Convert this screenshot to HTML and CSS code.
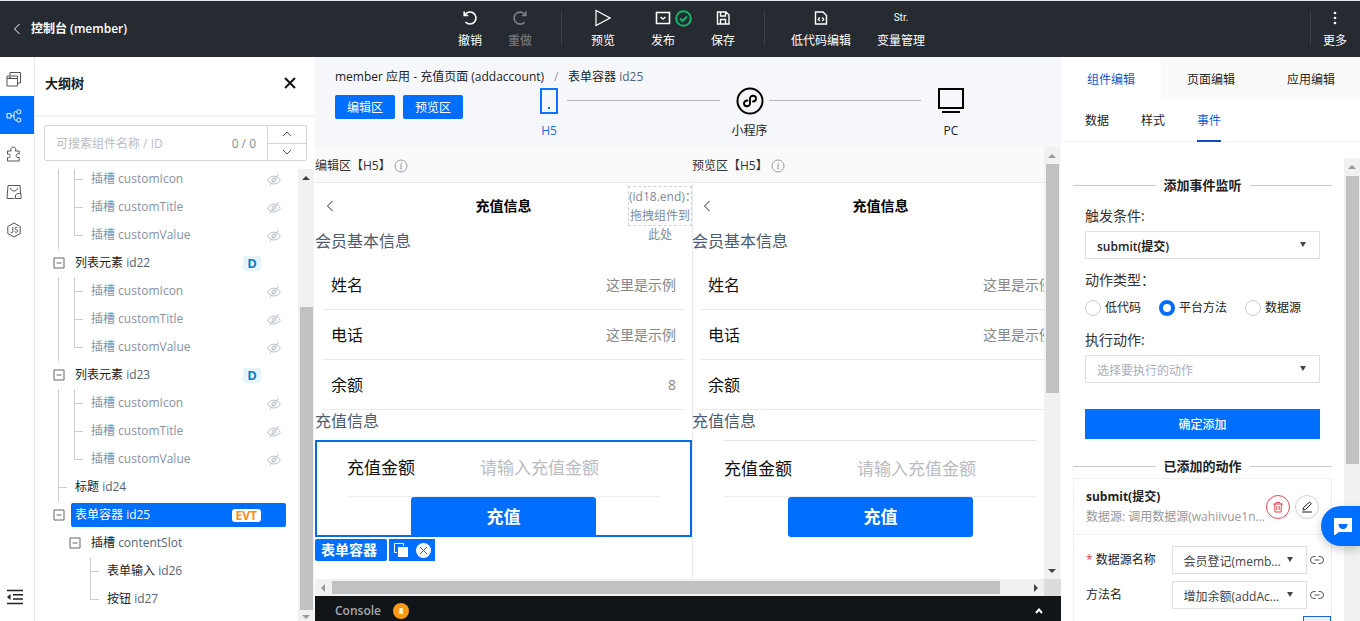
FILE: index.html
```html
<!DOCTYPE html>
<html lang="zh-CN">
<head>
<meta charset="utf-8">
<title>控制台 (member)</title>
<link rel="stylesheet" href="styles.css">
</head>
<body>
<svg class="defs" aria-hidden="true">
  <symbol id="eye" viewBox="0 0 14 14"><path d="M.7 7.2C2.2 4.6 4.4 3.2 7 3.2s4.800 1.400 6.300 4C11.800 9.800 9.600 11 7 11S2.200 9.800.7 7.200Z"/><circle cx="7" cy="7.100" r="2.100"/><path d="M11.300 1.500 2.700 12.500"/></symbol>
  <symbol id="minus" viewBox="0 0 12 12"><path d="M1 1h10v10H1ZM3.500 6h5"/></symbol>
  <symbol id="info" viewBox="0 0 14 14"><circle cx="7" cy="7" r="6"/><path d="M6 5.800h1.400L6.600 10h1.200M7.500 3.500v1"/></symbol>
  <symbol id="back" viewBox="0 0 8 12"><path d="M6.500 1 1.500 6l5 5"/></symbol>
  <symbol id="link" viewBox="0 0 14 10"><path d="M5.500 1.500H4a3.500 3.500 0 0 0 0 7h1.500M8.500 1.500H10a3.500 3.500 0 0 1 0 7H8.500M4.500 5h5"/></symbol>
</svg>

<header class="topbar">
  <a class="home" href="#"><svg width="8" height="12"><use href="#back"/></svg>控制台 (member)</a>
  <nav class="tools">
    <button class="tool w50"><span class="ticon"><svg width="16" height="16" viewBox="0 0 16 16"><path d="M2.200 1.500v4h4M2.600 5.300A6 6 0 1 1 3.500 12" stroke-width="1.600"/></svg></span>撤销</button>
    <button class="tool w50 off"><span class="ticon"><svg width="16" height="16" viewBox="0 0 16 16"><path d="M13.800 1.500v4h-4M13.400 5.300A6 6 0 1 0 12.500 12.200" stroke-width="1.600"/></svg></span>重做</button>
    <i class="vline first"></i>
    <button class="tool w60"><span class="ticon"><svg width="16" height="18" viewBox="0 0 16 18"><path d="M1 1.500v15L15 9Z" stroke-width="1.200"/></svg></span>预览</button>
    <button class="tool w60"><span class="ticon publish"><svg width="16" height="14" viewBox="0 0 16 14"><path d="M1.500 1.500h13v11h-13ZM5.500 6l2.500 2 2.500-2" stroke-width="1.600"/></svg><svg class="ok" width="17" height="17" viewBox="0 0 17 17"><circle cx="8.500" cy="8.500" r="7.300"/><path d="m5 8.500 2.500 2.500L12 6.500"/></svg></span>发布</button>
    <button class="tool w60"><span class="ticon"><svg width="14" height="14" viewBox="0 0 14 14"><path d="M1.500 1h8.500l3 3v9H1.500ZM4.500 1v4h5V1M4.500 13V8.500h5V13" stroke-width="1.400"/></svg></span>保存</button>
    <i class="vline second"></i>
    <button class="tool w80"><span class="ticon"><svg width="14" height="14" viewBox="0 0 14 14"><path d="M1.500 1H9l3.500 3.500V13h-11ZM5.800 6.500 4.300 8.300l1.500 1.800M8.200 6.500l1.500 1.800-1.500 1.800" stroke-width="1.400"/></svg></span>低代码编辑</button>
    <button class="tool w80"><span class="ticon str">Str.</span>变量管理</button>
  </nav>
  <button class="tool more"><span class="ticon"><svg width="4" height="14" viewBox="0 0 4 14"><g fill="#fff" stroke="none"><circle cx="2" cy="2" r="1.300"/><circle cx="2" cy="7" r="1.300"/><circle cx="2" cy="12" r="1.300"/></g></svg></span>更多</button>
</header>

<main class="work">
  <nav class="rail">
    <button aria-label="页面"><svg width="16" height="16" viewBox="0 0 16 16"><path d="M1 5h10.500v10H1ZM1 7.500h10.500M4 4.500V1.500h10.500V12H12M3 6.300h2"/></svg></button>
    <button class="on" aria-label="大纲树"><svg width="16" height="14" viewBox="0 0 16 14"><path d="M1 4.500h4v4.500H1ZM5 6.800h3M10.500 2.500H9.800C8.500 2.500 8 3.200 8 4.200v5c0 1.200.5 2 1.800 2h.7"/><circle cx="12.800" cy="2.800" r="2.100"/><circle cx="12.800" cy="11" r="2.100"/></svg></button>
    <button aria-label="组件"><svg width="16" height="16" viewBox="0 0 16 16"><path d="M1.500 5h3.700C4.200 3 5.300 1 7.300 1s3.100 2 2.100 4h3.800v3c-2-.8-3 .3-3 1.700s1 2.500 3 1.700V15H1.500v-3.500c2 .8 2.600-.2 2.600-1.600S3.500 7.500 1.500 8.200Z"/></svg></button>
    <button aria-label="素材"><svg width="16" height="16" viewBox="0 0 16 16"><path d="M8.500 14.500H1L2 1.500h12l.6 8M4.500 4c.5 4 6.500 4 7 0M9.500 14.500V11l2-1.500h3.500v5Z"/></svg></button>
    <button aria-label="脚本"><svg width="16" height="16" viewBox="0 0 16 16"><path d="m8 1 6.200 3.500v7L8 15l-6.200-3.500v-7ZM6.800 5v4.500c0 1.500-2 1.500-2.300.4M11.500 6c-.8-1-2.900-.8-2.700.6.200 1.200 2.900.8 2.900 2.500 0 1.500-2.500 1.500-3.200.4"/></svg></button>
    <button class="fold" aria-label="收起"><svg width="18" height="16" viewBox="0 0 18 16"><path d="M1 1.500h16M7 5.800h10M7 10h10M1 14.500h16" stroke-width="1.600"/><path d="M4.500 5v6L1 8Z" fill="#222" stroke="none"/></svg></button>
  </nav>

  <aside class="outline">
    <div class="ohead"><h2>大纲树</h2><button aria-label="关闭"><svg width="12" height="12" viewBox="0 0 12 12"><path d="m1 1 10 10M11 1 1 11"/></svg></button></div>
    <div class="search">
      <input type="text" aria-label="搜索组件" placeholder="可搜索组件名称 / ID">
      <span class="count">0 / 0</span>
      <div class="steps-btn">
        <button aria-label="上一个"><svg width="10" height="6" viewBox="0 0 10 6"><path d="m1 5 4-4 4 4"/></svg></button>
        <button aria-label="下一个"><svg width="10" height="6" viewBox="0 0 10 6"><path d="m1 1 4 4 4-4"/></svg></button>
      </div>
    </div>
    <div class="treebox">
      <ul class="tree">
        <li class="dim"><i class="g v"></i><i class="g t"></i><span class="node">插槽 customIcon<svg class="eye"><use href="#eye"/></svg></span></li>
        <li class="dim"><i class="g v"></i><i class="g t"></i><span class="node">插槽 customTitle<svg class="eye"><use href="#eye"/></svg></span></li>
        <li class="dim"><i class="g v"></i><i class="g l"></i><span class="node">插槽 customValue<svg class="eye"><use href="#eye"/></svg></span></li>
        <li><button class="g" aria-label="折叠"><svg><use href="#minus"/></svg></button><span class="node">列表元素 <em>id22</em><b class="tagd">D</b></span></li>
        <li class="dim"><i class="g v"></i><i class="g t"></i><span class="node">插槽 customIcon<svg class="eye"><use href="#eye"/></svg></span></li>
        <li class="dim"><i class="g v"></i><i class="g t"></i><span class="node">插槽 customTitle<svg class="eye"><use href="#eye"/></svg></span></li>
        <li class="dim"><i class="g v"></i><i class="g l"></i><span class="node">插槽 customValue<svg class="eye"><use href="#eye"/></svg></span></li>
        <li><button class="g" aria-label="折叠"><svg><use href="#minus"/></svg></button><span class="node">列表元素 <em>id23</em><b class="tagd">D</b></span></li>
        <li class="dim"><i class="g v"></i><i class="g t"></i><span class="node">插槽 customIcon<svg class="eye"><use href="#eye"/></svg></span></li>
        <li class="dim"><i class="g v"></i><i class="g t"></i><span class="node">插槽 customTitle<svg class="eye"><use href="#eye"/></svg></span></li>
        <li class="dim"><i class="g v"></i><i class="g l"></i><span class="node">插槽 customValue<svg class="eye"><use href="#eye"/></svg></span></li>
        <li><i class="g t"></i><span class="node">标题 <em>id24</em></span></li>
        <li class="sel"><button class="g" aria-label="折叠"><svg><use href="#minus"/></svg></button><span class="node">表单容器 <em>id25</em><b class="evt">EVT</b></span></li>
        <li><i class="g"></i><button class="g" aria-label="折叠"><svg><use href="#minus"/></svg></button><span class="node">插槽 <em>contentSlot</em></span></li>
        <li><i class="g"></i><i class="g"></i><i class="g t"></i><span class="node">表单输入 <em>id26</em></span></li>
        <li><i class="g"></i><i class="g"></i><i class="g l"></i><span class="node">按钮 <em>id27</em></span></li>
      </ul>
      <div class="vbar tbar"><i class="up dark"></i><i class="thumb"></i><i class="down"></i></div>
    </div>
  </aside>

  <section class="center">
    <div class="chead">
      <div class="crumbs"><span>member 应用 - 充值页面 (addaccount)</span><i>/</i><span>表单容器 <em>id25</em></span></div>
      <div class="modes">
        <button class="pill">编辑区</button><button class="pill">预览区</button>
        <div class="platforms">
          <button class="pf on"><svg width="18" height="26" viewBox="0 0 18 26"><path d="M1 1h16v24H1Z" stroke-width="2"/><path d="M8 19h2v2H8Z" fill="#006eff" stroke="none"/></svg>H5</button>
          <i class="conn"></i>
          <button class="pf"><svg width="28" height="28" viewBox="0 0 28 28"><circle cx="14" cy="14" r="12.500" stroke-width="2"/><path d="M11.500 13.500C9 13.500 8 15 8 16.500c0 3.500 6 3.800 6 0v-5c0-3.800 6-3.500 6 0 0 1.700-1.200 3-3 3" stroke-width="1.900" stroke-linecap="round"/></svg>小程序</button>
          <i class="conn"></i>
          <button class="pf"><svg width="26" height="26" viewBox="0 0 26 26"><path d="M1 1h24v19H1ZM4 24h18" stroke-width="2"/></svg>PC</button>
        </div>
      </div>
    </div>

    <div class="stage">
      <div class="panes">
        <div class="pane">
          <div class="ptitle">编辑区【H5】<svg width="14" height="14"><use href="#info"/></svg></div>
          <div class="phone">
            <div class="pnav"><svg width="8" height="12"><use href="#back"/></svg><strong>充值信息</strong><div class="slot">(id18.end)：拖拽组件到此处</div></div>
            <h3>会员基本信息</h3>
            <dl class="cells">
              <div><dt>姓名</dt><dd>这里是示例</dd></div>
              <div><dt>电话</dt><dd>这里是示例</dd></div>
              <div><dt>余额</dt><dd>8</dd></div>
            </dl>
            <h3>充值信息</h3>
            <form class="pay picked">
              <div class="field"><label for="amt1">充值金额</label><input id="amt1" type="text" placeholder="请输入充值金额"></div>
              <button type="button">充值</button>
            </form>
            <div class="handle"><span>表单容器</span><div><svg width="14" height="14" viewBox="0 0 14 14"><path d="M3 9.500H.5V.5h9V3" stroke="#fff" fill="none"/><path d="M4 4h10v10H4Z" fill="#fff" stroke="none"/></svg><svg width="15" height="15" viewBox="0 0 15 15"><circle cx="7.500" cy="7.500" r="7.500" fill="#fff" stroke="none"/><path d="m4 4 7 7M11 4l-7 7" stroke="#006eff"/></svg></div></div>
          </div>
        </div>
        <div class="pane">
          <div class="ptitle">预览区【H5】<svg width="14" height="14"><use href="#info"/></svg></div>
          <div class="phone side">
            <div class="pnav"><svg width="8" height="12"><use href="#back"/></svg><strong>充值信息</strong></div>
            <h3>会员基本信息</h3>
            <dl class="cells">
              <div><dt>姓名</dt><dd>这里是示例</dd></div>
              <div><dt>电话</dt><dd>这里是示例</dd></div>
              <div><dt>余额</dt><dd></dd></div>
            </dl>
            <h3>充值信息</h3>
            <form class="pay">
              <div class="field lined"><label for="amt2">充值金额</label><input id="amt2" type="text" placeholder="请输入充值金额"></div>
              <button type="button">充值</button>
            </form>
          </div>
        </div>
      </div>
      <div class="vbar sbar"><i class="up"></i><i class="thumb"></i><i class="down dark"></i></div>
    </div>
    <div class="hbar"><i class="left"></i><div class="htrack"><i class="thumb"></i></div><i class="right"></i><i class="corner"></i></div>
    <footer class="console">Console<b>8</b><button aria-label="展开"><svg width="8" height="6" viewBox="0 0 8 6"><path d="m1 5 3-3.500L7 5"/></svg></button></footer>
  </section>

  <aside class="props">
    <div class="tabs"><button class="on">组件编辑</button><button>页面编辑</button><button>应用编辑</button></div>
    <div class="subtabs"><button>数据</button><button>样式</button><button class="on">事件</button></div>
    <div class="pbody">
      <div class="pcontent">
        <h4>添加事件监听</h4>
        <div class="block">
          <label class="lab" for="s1">触发条件:</label>
          <div class="pick"><select id="s1" class="strong"><option>submit(提交)</option></select></div>
          <p class="lab">动作类型：</p>
          <div class="radios">
            <label><input type="radio" name="k">低代码</label>
            <label><input type="radio" name="k" checked>平台方法</label>
            <label><input type="radio" name="k">数据源</label>
          </div>
          <label class="lab" for="s2">执行动作:</label>
          <div class="pick"><select id="s2" class="empty"><option>选择要执行的动作</option></select></div>
          <button class="submit">确定添加</button>
        </div>
        <h4>已添加的动作</h4>
        <div class="card">
          <div class="cardhead">
            <div class="what"><strong>submit(提交)</strong><span>数据源: 调用数据源(wahiivue1n...</span></div>
            <button class="round del" aria-label="删除"><svg width="12" height="12" viewBox="0 0 12 12"><path d="M1 3h10M4 3V1.500h4V3M2.500 3l.5 8h6l.5-8M4.800 5v4M7.200 5v4"/></svg></button>
            <button class="round" aria-label="编辑"><svg width="12" height="12" viewBox="0 0 12 12"><path d="M1 11h10M2 9l.6-2.600L8.500 1l1.800 1.800-5.800 5.700Z"/></svg></button>
          </div>
          <div class="param"><label for="s3"><i>*</i> 数据源名称</label><div class="pick small"><select id="s3"><option>会员登记(memb...</option></select></div><svg width="14" height="10"><use href="#link"/></svg></div>
          <div class="param"><label for="s4">方法名</label><div class="pick small"><select id="s4"><option>增加余额(addAc...</option></select></div><svg width="14" height="10"><use href="#link"/></svg></div>
          <div class="next"></div>
        </div>
      </div>
      <div class="vbar pbar"><i class="up"></i><i class="thumb"></i></div>
    </div>
  </aside>
</main>
<button class="chat" aria-label="客服"><svg width="18" height="17" viewBox="0 0 18 17"><path d="M0 0h18v14H5l-4 3H0Z" fill="#fff"/><path d="M4.500 6h9c0 3-2 5-4.500 5S4.500 9 4.500 6Z" fill="#006eff"/></svg></button>
</body>
</html>
```
FILE: styles.css
```css
* { box-sizing: border-box; margin: 0; padding: 0; }
body { height: 100vh; overflow: hidden; display: flex; flex-direction: column; position: relative; font: 12px/18px "Open Sans", "Noto Sans CJK SC", sans-serif; color: #222; background: #fff; }
button, input, select { font: inherit; color: inherit; border: 0; background: none; outline: 0; border-radius: 0; }
button { cursor: pointer; }
svg { display: block; flex: none; fill: none; stroke: currentColor; }
em, i { font-style: normal; }
.defs { position: absolute; width: 0; height: 0; }

.topbar { flex: 0 0 57px; display: flex; background: #262b32; border-top: 1px solid #dfe6ec; color: #fff; }
.home { width: 445px; display: flex; align-items: center; gap: 10px; padding-left: 13px; color: #fff; font-weight: 600; text-decoration: none; }
.tools { display: flex; flex: 1; }
.tool { display: flex; flex-direction: column; align-items: center; padding-top: 7px; gap: 4px; }
.ticon { height: 20px; display: flex; align-items: center; position: relative; }
.w50 { width: 50px; }
.w60 { width: 60px; }
.w80 { width: 80px; }
.off { color: #7d8187; }
.str { font: 10px/20px Roboto, sans-serif; }
.ok { position: absolute; left: 20px; stroke: #12b76a; stroke-width: 2; }
.vline { width: 1px; height: 34px; margin-top: 10px; background: #3a4048; }
.first { margin-left: 16px; margin-right: 11px; }
.second { margin-left: 11px; margin-right: 16px; }
.more { width: 50px; background: linear-gradient(#3a4048, #3a4048) 0 10px / 1px 34px no-repeat; }

.work { flex: 1; min-height: 0; display: flex; }
.rail { flex: 0 0 35px; display: flex; flex-direction: column; border-right: 1px solid #e5e8ed; color: #555; }
.rail button { height: 38px; padding: 2px 0 0 6px; display: flex; align-items: center; }
.rail button:first-child { height: 39px; padding-top: 4px; }
.rail .on { background: #006eff; color: #fff; }
.rail .fold { margin-top: auto; height: 48px; color: #222; padding-top: 0; }

.outline { flex: 0 0 280px; min-height: 0; display: flex; flex-direction: column; background: #fff; }
.ohead { height: 60px; padding: 0 19px 7px 10px; display: flex; align-items: center; justify-content: space-between; border-bottom: 2px solid #f2f3f5; }
.ohead h2 { font-size: 13px; font-weight: 600; }
.ohead svg { stroke: #111; stroke-width: 2; }
.search { height: 36px; margin: 8px 8px 8px 9px; display: flex; align-items: center; border: 1px solid #d3d7dd; border-radius: 2px; }
.search input { flex: 1; min-width: 0; padding: 2px 0 0 11px; }
::placeholder { color: #b8bcc3; opacity: 1; }
.count { color: #888e98; padding: 2px 11px 0 0; }
.steps-btn { width: 39px; height: 34px; display: flex; flex-direction: column; border-left: 1px solid #d3d7dd; }
.steps-btn button { flex: 1; display: grid; place-items: center; color: #555; }
.steps-btn button + button { border-top: 1px solid #d3d7dd; }
.treebox { flex: 1; min-height: 0; display: flex; overflow: hidden; }
.tree { flex: 1; list-style: none; padding: 0 12px 0 16px; margin-top: -4px; }
.tree li { height: 28px; display: flex; align-items: center; }
.g { flex: none; width: 16px; height: 28px; }
.v { background: linear-gradient(#c9cdd4, #c9cdd4) 7px 0 / 1px 100% no-repeat; }
.t { background: linear-gradient(#c9cdd4, #c9cdd4) 7px 0 / 1px 100% no-repeat, linear-gradient(#c9cdd4, #c9cdd4) 7px 14px / 9px 1px no-repeat; }
.l { background: linear-gradient(#c9cdd4, #c9cdd4) 7px 0 / 1px 14px no-repeat, linear-gradient(#c9cdd4, #c9cdd4) 7px 14px / 9px 1px no-repeat; }
.g svg { width: 12px; height: 12px; margin: 0 auto 0 2px; stroke: #666; }
.node { flex: 1; height: 24px; margin-left: 4px; padding: 0 5px 0 4px; display: flex; align-items: center; white-space: pre; border-radius: 2px; }
.node em, .crumbs em { color: #52667a; }
.dim .node { color: #8594a6; }
.eye { width: 14px; height: 14px; margin-left: auto; margin-top: 2px; stroke: #b9c0c9; }
.tagd { margin: 0 20px 0 auto; width: 18px; border-radius: 3px; background: #e3f4fc; color: #0f7fc4; text-align: center; font-size: 13px; line-height: 15px; }
.sel .node { background: #006eff; color: #fff; }
.sel .node em { color: #fff; }
.evt { margin: 0 20px 0 auto; padding: 0 4px; border-radius: 3px; background: #fff; color: #ff8c1a; line-height: 13px; }

.vbar { flex: none; width: 16px; display: flex; flex-direction: column; align-items: center; background: #f1f1f1; }
.vbar .thumb { width: 13px; background: #c1c1c1; }
.up, .down, .left, .right { border: 4px solid transparent; width: 0; height: 0; flex: none; }
.up { border-top: 0; border-bottom-color: #999; margin: 7px 0; }
.down { border-bottom: 0; border-top-color: #999; margin: auto 0 6px; }
.up.dark { border-bottom-color: #444; }
.down.dark { border-top-color: #444; }
.left { border-left: 0; border-right-color: #999; margin: 0 7px 0 6px; }
.right { border-right: 0; border-left-color: #444; margin: 0 6px; }
.tbar { margin-right: 1px; }
.tbar .thumb { flex: 0 0 67%; margin-top: 120px; }
.tbar .down { margin-bottom: 2px; }

.center { flex: 1; min-width: 0; display: flex; flex-direction: column; background: #fafafa; }
.chead { height: 90px; background: #f5f7fa; }
.crumbs { height: 30px; padding: 11px 0 0 20px; display: flex; }
.crumbs i { width: 24px; text-align: center; color: #999; }
.modes { display: flex; align-items: flex-start; padding-left: 20px; gap: 8px; }
.pill { width: 60px; height: 24px; margin-top: 8px; padding-top: 2px; background: #006eff; color: #fff; border-radius: 2px; }
.platforms { flex: 1; display: flex; margin: 0 92px 0 60px; }
.pf { width: 36px; display: flex; flex-direction: column; align-items: center; gap: 7px; white-space: nowrap; }
.pf svg { height: 28px; stroke: #000; }
.pf.on { color: #1c6ae4; }
.pf.on svg { stroke: #0b74ff; }
.conn { flex: 1; height: 1px; margin: 13px 12px 0 0; background: #b5b9bf; }
.conn + .pf + .conn { margin-left: 1px; }

.stage { flex: 1; min-height: 0; display: flex; }
.panes { flex: 1; min-width: 0; display: flex; overflow: hidden; }
.pane { flex: 0 0 377px; min-width: 0; display: flex; flex-direction: column; }
.ptitle { height: 35px; padding-top: 2px; display: flex; align-items: center; gap: 3px; white-space: nowrap; color: #333; }
.ptitle svg { stroke: #98a0aa; }
.phone { flex: 1; background: #fff; border-top: 1px solid #e8eaed; }
.side { box-shadow: inset 1px 0 #e8eaed; }
.pnav { height: 47px; display: grid; grid-template-columns: 64px 1fr 64px; align-items: start; }
.pnav svg { margin: 17px 0 0 11px; }
.pnav strong { padding-top: 12px; text-align: center; font-size: 14px; line-height: 22px; color: #000; }
.slot { height: 40px; margin-top: 3px; border: 1px dashed #ccd2d9; color: #7d8b9b; line-height: 19px; text-align: center; }
.phone h3 { font-size: 16px; line-height: 22px; font-weight: 400; color: #4d5b70; }
.cells { margin: 8px 7px 0 8px; }
.cells div { height: 50px; display: flex; align-items: center; justify-content: space-between; padding: 0 9px 0 8px; border-bottom: 1px solid #e8eaed; }
.cells dt { font-size: 16px; color: #111; }
.cells dd { font-size: 14px; color: #888; }
.pay { margin-top: 8px; display: flex; flex-direction: column; align-items: center; }
.picked { box-shadow: inset 0 0 0 2px #0a69e6; }
.field { align-self: stretch; height: 57px; margin: 0 32px; display: flex; align-items: center; border-bottom: 1px solid #eceef0; font-size: 17px; color: #111; line-height: 24px; }
.lined { border-top: 1px solid #e3e5e8; }
.field label { width: 133px; }
.field input { flex: 1; min-width: 0; }
.pay button { width: 185px; height: 40px; border-radius: 3px; background: #006eff; color: #fff; font-size: 17px; font-weight: 600; }
.handle { display: flex; gap: 2px; margin-top: 2px; color: #fff; }
.handle span { width: 72px; height: 22px; line-height: 22px; padding-right: 4px; text-align: center; font-size: 14px; font-weight: 600; background: #006eff; border-radius: 2px; }
.handle div { width: 46px; height: 22px; display: flex; align-items: center; justify-content: space-between; padding: 0 4px 0 5px; background: #006eff; }
.sbar { margin-right: 1px; }
.sbar .up { margin-bottom: 6px; }
.sbar .thumb { flex: 0 0 53%; }

.hbar { height: 17px; display: flex; align-items: center; background: #f1f1f1; }
.htrack { flex: 1; }
.htrack .thumb { display: block; width: 96%; height: 13px; background: #c1c1c1; }
.corner { width: 17px; height: 17px; background: #dcdcdc; }
.console { height: 25px; padding: 5px 18px 0 20px; display: flex; align-items: center; gap: 12px; background: #121518; color: #a5a9ae; font-weight: 600; }
.console b { width: 16px; height: 16px; border-radius: 8px; background: #ff9a16; color: #fff; font-size: 8px; line-height: 16px; text-align: center; }
.console button { margin-left: auto; color: #fff; }
.console svg { stroke-width: 2; }

.props { flex: 0 0 299px; min-width: 0; min-height: 0; display: flex; flex-direction: column; background: #fff; }
.tabs { height: 42px; display: flex; }
.tabs button { flex: 0 0 100px; background: #fafafa; padding-top: 3px; }
.tabs .on { background: #fff; color: #1258c9; }
.subtabs { height: 43px; padding-left: 24px; display: flex; gap: 32px; border-bottom: 1px solid #eceef0; }
.subtabs button { width: 24px; height: 43px; padding-top: 3px; border-bottom: 2px solid transparent; white-space: nowrap; }
.subtabs .on { color: #0a5fd8; border-bottom-color: #0a52c4; }
.pbody { flex: 1; min-height: 0; display: flex; overflow: hidden; }
.pcontent { flex: 1; min-width: 0; padding: 33px 12px 0 12px; }
.pbar { margin-top: 16px; }
.pbar .thumb { flex: 0 0 288px; }
h4 { display: flex; align-items: center; gap: 8px; font-size: 13px; line-height: 20px; font-weight: 600; }
h4::before, h4::after { content: ""; flex: 1; height: 1px; background: #c6cad0; }
.block { padding: 11px 12px 17px; }
.lab { display: block; font-size: 14px; line-height: 20px; color: #333; margin-bottom: 5px; }
.pick { position: relative; margin-bottom: 11px; }
.pick select { appearance: none; display: block; width: 100%; height: 28px; padding: 3px 11px 0; border: 1px solid #dde1e6; background: #fff; line-height: 18px; color: #444; }
.pick::after { content: ""; position: absolute; right: 14px; top: 11px; border: 3px solid transparent; border-top: 5px solid #444; border-bottom: 0; pointer-events: none; }
.pick .strong { font-weight: 600; color: #222; }
.pick .empty { color: #aab0b8; }
.radios { display: flex; gap: 18px; padding: 4px 0 13px; }
.radios label { display: flex; align-items: center; gap: 4px; white-space: nowrap; }
.radios input { appearance: none; width: 16px; height: 16px; border: 1px solid #ccd0d6; border-radius: 50%; }
.radios input:checked { border: 4px solid #006eff; }
.submit { display: block; width: 100%; height: 30px; margin-top: 26px; padding-top: 2px; background: #006eff; color: #fff; font-weight: 500; }
.card { margin-top: 2px; border: 1px solid #eceef1; }
.cardhead { height: 56px; padding: 0 12px; display: flex; align-items: center; gap: 5px; border-bottom: 1px solid #eceef1; }
.what { flex: 1; min-width: 0; display: flex; flex-direction: column; line-height: 20px; white-space: nowrap; }
.what span { color: #999; }
.round { flex: none; width: 24px; height: 24px; display: grid; place-items: center; border: 1px solid #ccd0d6; border-radius: 50%; }
.del { border-color: #e54555; color: #e54555; }
.param { display: flex; align-items: center; padding: 0 7px 0 12px; margin-bottom: 7px; justify-content: space-between; }
.cardhead + .param { margin-top: 11px; }
.param label { width: 82px; white-space: nowrap; }
.param label i { color: #e54545; }
.small { width: 135px; margin-bottom: 0; }
.param svg { color: #555; }
.next { width: 28px; height: 28px; margin-left: auto; border: 1px solid #1a62d6; background: #e9f1fb; }
.chat { position: absolute; right: 0; top: 506px; width: 39px; height: 40px; display: grid; place-items: center; padding-left: 5px; border-radius: 20px 0 0 20px; background: #006eff; box-shadow: 0 4px 10px #0003; }
.chat svg { stroke: none; }
```
